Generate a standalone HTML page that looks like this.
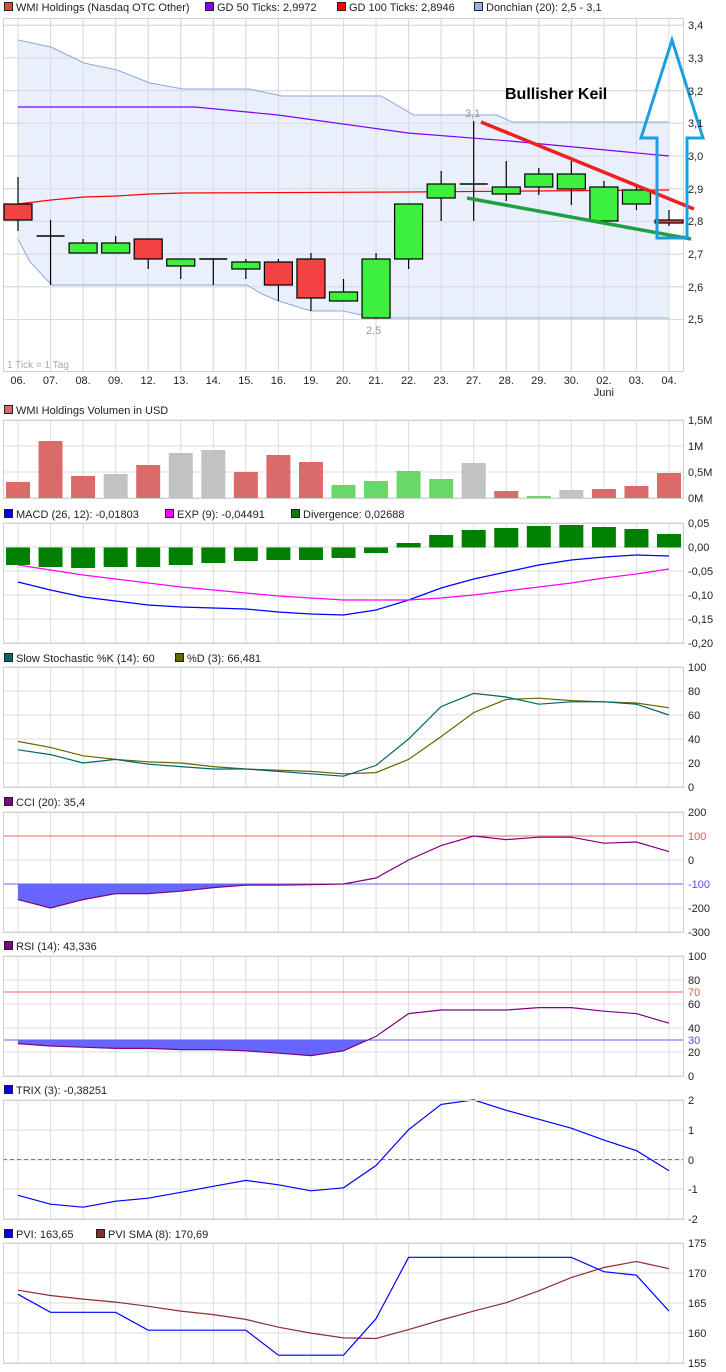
<!DOCTYPE html>
<html><head><meta charset="utf-8">
<style>
html,body{margin:0;padding:0;background:#fff;}
svg{display:block;font-family:"Liberation Sans",sans-serif;}
</style></head>
<body>
<svg id="s" width="726" height="1372" xmlns="http://www.w3.org/2000/svg"></svg>
<script>
var o=[];
function X(i){return 18+32.55*i;}
var L=3,R=684;
function rect(x,y,w,h,f,st,sw){o.push('<rect x="'+x+'" y="'+y+'" width="'+w+'" height="'+h+'" fill="'+f+'"'+(st?' stroke="'+st+'" stroke-width="'+(sw||1)+'"':'')+'/>');}
function line(x1,y1,x2,y2,c,w,extra){o.push('<line x1="'+x1+'" y1="'+y1+'" x2="'+x2+'" y2="'+y2+'" stroke="'+c+'" stroke-width="'+(w||1)+'" '+(extra||'')+'/>');}
function text(x,y,t,c,sz,extra){o.push('<text x="'+x+'" y="'+y+'" fill="'+(c||'#222')+'" font-size="'+(sz||11)+'" '+(extra||'')+'>'+t+'</text>');}
function poly(pts,c,w,fill){o.push('<polyline points="'+pts.map(function(p){return p[0].toFixed(1)+','+p[1].toFixed(1)}).join(' ')+'" fill="'+(fill||'none')+'" stroke="'+c+'" stroke-width="'+(w||1)+'"/>');}
function series(vals,fy){return vals.map(function(v,i){return [X(i),fy(v)];});}
function legend(y,items){items.forEach(function(it){rect(it[0]+0.5,y-4.5,8,8,it[1],'#222',1);text(it[0]+12,y+4,it[2],'#222',11);});}
function panel(top,bot,hl){
  rect(L,top,R-L,bot-top,'#fff');
  hl.forEach(function(y){line(L,y,R,y,'#dcdcdc',1);});
  for(var i=0;i<=20;i++)line(X(i),top,X(i),bot,'#dcdcdc',1);
}
function border(top,bot){o.push('<rect x="'+(L+0.5)+'" y="'+(top+0.5)+'" width="'+(R-L-1)+'" height="'+(bot-top-1)+'" fill="none" stroke="#d0d0d0"/>');}
function ylab(items){items.forEach(function(it){text(688,it[1]+4,it[0],it[2]||'#222',11);});}

/* ===== MAIN ===== */
legend(7,[[4,'#f04040','WMI Holdings (Nasdaq OTC Other)'],[205,'#7f00ff','GD 50 Ticks: 2,9972'],[337,'#ff0000','GD 100 Ticks: 2,8946'],[474,'#9ab0e0','Donchian (20): 2,5 - 3,1']]);
var py=function(p){return 156+(3.0-p)*327;};
var hl=[];for(var p=3.4;p>2.45;p-=0.1)hl.push(py(p));
panel(18,372,hl);
// donchian
var up=[[18,40],[51,47],[84,63],[117,70],[150,83],[183,89],[249,89],[282,96],[381,96],[414,115],[497,115],[512,122],[669,122]];
var lo=[[18,239],[30,262],[51.7,285],[246.7,285],[262,294],[278.7,301],[311,311],[343,311],[375,318],[669,318]];
var band=up.concat(lo.slice().reverse());
o.push('<polygon points="'+band.map(function(p){return p.join(',')}).join(' ')+'" fill="#eaf0fb"/>');
for(var i=0;i<=20;i++)line(X(i),18,X(i),372,'#d6dae2',1);
hl.forEach(function(y){line(L,y,R,y,'#d6dae2',1);});
poly(up,'#8fa8dc',1);poly(lo,'#8fa8dc',1);
// GD50
poly([[18,107],[195,107],[278,115],[408,133],[510,141],[669,156]],'#7f00ff',1.2);
// GD100
poly([[18,204],[51,200],[84,197],[117,196],[150,194],[183,193],[408,192],[530,191],[669,190]],'#ff0000',1.2);
border(18,372);
// candles: [type, bodyTop, bodyBot, wickTop, wickBot]
var C=[['r',204,220,177,231],['d',236,236,220,285],['g',243,253,239,253],['g',243,253,236,253],['r',239,259,239,269],['g',259,266,259,279],['d',259,259,259,285],['g',262,269,259,279],['r',262,285,259,301],['r',259,298,253,311],['g',292,301,279,301],['g',259,318,253,319],['g',204,259,204,269],['g',184,198,171,221],['d',184,184,121,221],['g',187,194,161,201],['g',174,187,168,195],['g',174,189,161,205],['g',187,221,181,221],['g',190,204,184,210],['r',220,223,210,226]];
C.forEach(function(c,i){var x=X(i);
  line(x,c[3],x,c[4],'#000',1.2);
  if(c[0]=='d'){line(x-14,c[1],x+14,c[1],'#000',1.4);}
  else rect(x-14,c[1],28,Math.max(c[2]-c[1],2),c[0]=='g'?'#3ef03e':'#f24242','#000',1.2);
});
// trendlines
line(481,122,694,209,'#f02020',3.5);
line(467,198,691,239,'#20a040',3.5);
// arrow
o.push('<polygon points="657,238 657,138 641,138 672,40 703,138 687,138 687,238" fill="none" stroke="#1aa0e0" stroke-width="3"/>');
text(505,99,'Bullisher Keil','#000',16,'font-weight="bold"');
text(465,117,'3,1','#999',11);
text(366,334,'2,5','#999',11);
text(7,368,'1 Tick = 1 Tag','#aaa',10);
ylab([['3,4',25],['3,3',58],['3,2',91],['3,1',123],['3,0',156],['2,9',189],['2,8',221],['2,7',254],['2,6',287],['2,5',319]]);
var xl=['06.','07.','08.','09.','12.','13.','14.','15.','16.','19.','20.','21.','22.','23.','27.','28.','29.','30.','02.','03.','04.'];
xl.forEach(function(t,i){text(X(i),384,t,'#222',11,'text-anchor="middle"');});
text(X(18),396,'Juni','#222',11,'text-anchor="middle"');

/* ===== VOLUME ===== */
legend(410,[[4,'#d96a6a','WMI Holdings Volumen in USD']]);
panel(420,498,[420,446,472,498]);
var V=[['r',482],['r',441],['r',476],['s',474],['r',465],['s',453],['s',450],['r',472],['r',455],['r',462],['g',485],['g',481],['g',471],['g',479],['s',463],['r',491],['g',496],['s',490],['r',489],['r',486],['r',473]];
V.forEach(function(v,i){rect(X(i)-12,v[1],24,498-v[1],v[0]=='r'?'#db6a6a':v[0]=='g'?'#68d968':'#c2c2c2');});
border(420,499);
ylab([['1,5M',420],['1M',446],['0,5M',472],['0M',498]]);

/* ===== MACD ===== */
legend(514,[[4,'#0000ff','MACD (26, 12): -0,01803'],[165,'#ff00ff','EXP (9): -0,04491'],[291,'#008000','Divergence: 0,02688']]);
panel(523,643,[523,547,571,595,619,643]);
var D=[565,567,568,567,567,565,563,561,560,560,558,553,543,535,530,528,526,525,527,529,534];
D.forEach(function(d,i){var t=Math.min(d,547.5),b=Math.max(d,547.5);rect(X(i)-12,t,24,b-t,'#008000');});
poly(series([582,590,597,601,605,607,608,609,612,614,615,610,600,588,579,572,565,560,557,555,556],function(v){return v}),'#0000ff',1.2);
poly(series([565,570,575,579,583,587,590,593,596,598,600,600,600,598,595,591,587,583,578,574,569],function(v){return v}),'#ff00ff',1.2);
border(523,644);
ylab([['0,05',523],['0,00',547],['-0,05',571],['-0,10',595],['-0,15',619],['-0,20',643]]);

/* ===== STOCH ===== */
legend(658,[[4,'#006666','Slow Stochastic %K (14): 60'],[175,'#666600','%D (3): 66,481']]);
panel(667,787,[667,691,715,739,763,787]);
var sy=function(v){return 787-v*1.2;};
poly(series([38,33,26,23,21,20,17,15,14,13,11,12,23,42,62,73,74,72,71,70,66],sy),'#666600',1.2);
poly(series([31,27,20,23,19,17,15,15,13,11,9,18,40,67,78,75,69,71,71,69,60],sy),'#006666',1.2);
border(667,788);
ylab([['100',667],['80',691],['60',715],['40',739],['20',763],['0',787]]);

/* ===== CCI ===== */
legend(802,[[4,'#800080','CCI (20): 35,4']]);
panel(812,932,[812,836,860,884,908,932]);
var cy=function(v){return 812+(200-v)*0.24;};
var cv=[-165,-200,-165,-140,-140,-130,-115,-105,-105,-103,-100,-75,0,60,100,85,95,95,70,75,35];
var cf=[[X(0),cy(-100)]];for(var i=0;i<=9;i++)cf.push([X(i),cy(cv[i])]);cf.push([X(9),cy(-100)]);
o.push('<polygon points="'+cf.map(function(p){return p.join(',')}).join(' ')+'" fill="#6666ff"/>');
line(L,cy(100),R,cy(100),'#f06060',1);line(L,cy(-100),R,cy(-100),'#6060f0',1);
poly(series(cv,cy),'#800080',1.2);
border(812,933);
ylab([['200',812],['100',836,'#f05050'],['0',860],['-100',884,'#5050f0'],['-200',908],['-300',932]]);

/* ===== RSI ===== */
legend(946,[[4,'#800080','RSI (14): 43,336']]);
panel(956,1076,[956,980,1004,1028,1052,1076]);
var ry=function(v){return 1076-v*1.2;};
var rv=[27,25,24,23,23,22,22,21,19,17,21,33,52,55,55,55,57,57,54,52,44];
var rf=[[X(0),ry(30)]];for(var i=0;i<=10;i++)rf.push([X(i),ry(rv[i])]);rf.push([X(10.75),ry(30)]);
o.push('<polygon points="'+rf.map(function(p){return p.join(',')}).join(' ')+'" fill="#6666ff"/>');
line(L,ry(70),R,ry(70),'#f06060',1);line(L,ry(30),R,ry(30),'#6060f0',1);
poly(series(rv,ry),'#800080',1.2);
border(956,1077);
ylab([['100',956],['80',980],['70',992,'#f05050'],['60',1004],['40',1028],['30',1040,'#5050f0'],['20',1052],['0',1076]]);

/* ===== TRIX ===== */
legend(1090,[[4,'#0000ff','TRIX (3): -0,38251']]);
panel(1100,1219,[1100,1130,1160,1189,1219]);
var ty=function(v){return 1159.5-v*29.8;};
line(L,1159.5,R,1159.5,'#777',1,'stroke-dasharray="4,3"');
poly(series([-1.2,-1.5,-1.6,-1.4,-1.3,-1.1,-0.9,-0.7,-0.85,-1.05,-0.95,-0.2,1.0,1.85,2.0,1.65,1.35,1.05,0.65,0.3,-0.38],ty),'#0000ff',1.2);
border(1100,1220);
ylab([['2',1100],['1',1130],['0',1160],['-1',1189],['-2',1219]]);

/* ===== PVI ===== */
legend(1234,[[4,'#0000ff','PVI: 163,65'],[96,'#803030','PVI SMA (8): 170,69']]);
panel(1243,1363,[1243,1273,1303,1333,1363]);
var vy=function(v){return 1243+(175-v)*5.97;};
poly(series([167.1,166.2,165.6,165.1,164.4,163.6,163.0,162.2,160.9,159.9,159.1,159.0,160.5,162.1,163.6,165.0,167.0,169.2,170.9,171.9,170.7],vy),'#8b3030',1.2);
poly(series([166.4,163.4,163.4,163.4,160.4,160.4,160.4,160.4,156.2,156.2,156.2,162.3,172.6,172.6,172.6,172.6,172.6,172.6,170.2,169.6,163.6],vy),'#0000ff',1.2);
border(1243,1364);
ylab([['175',1243],['170',1273],['165',1303],['160',1333],['155',1363]]);

document.getElementById('s').innerHTML=o.join('');
</script>
</body></html>
